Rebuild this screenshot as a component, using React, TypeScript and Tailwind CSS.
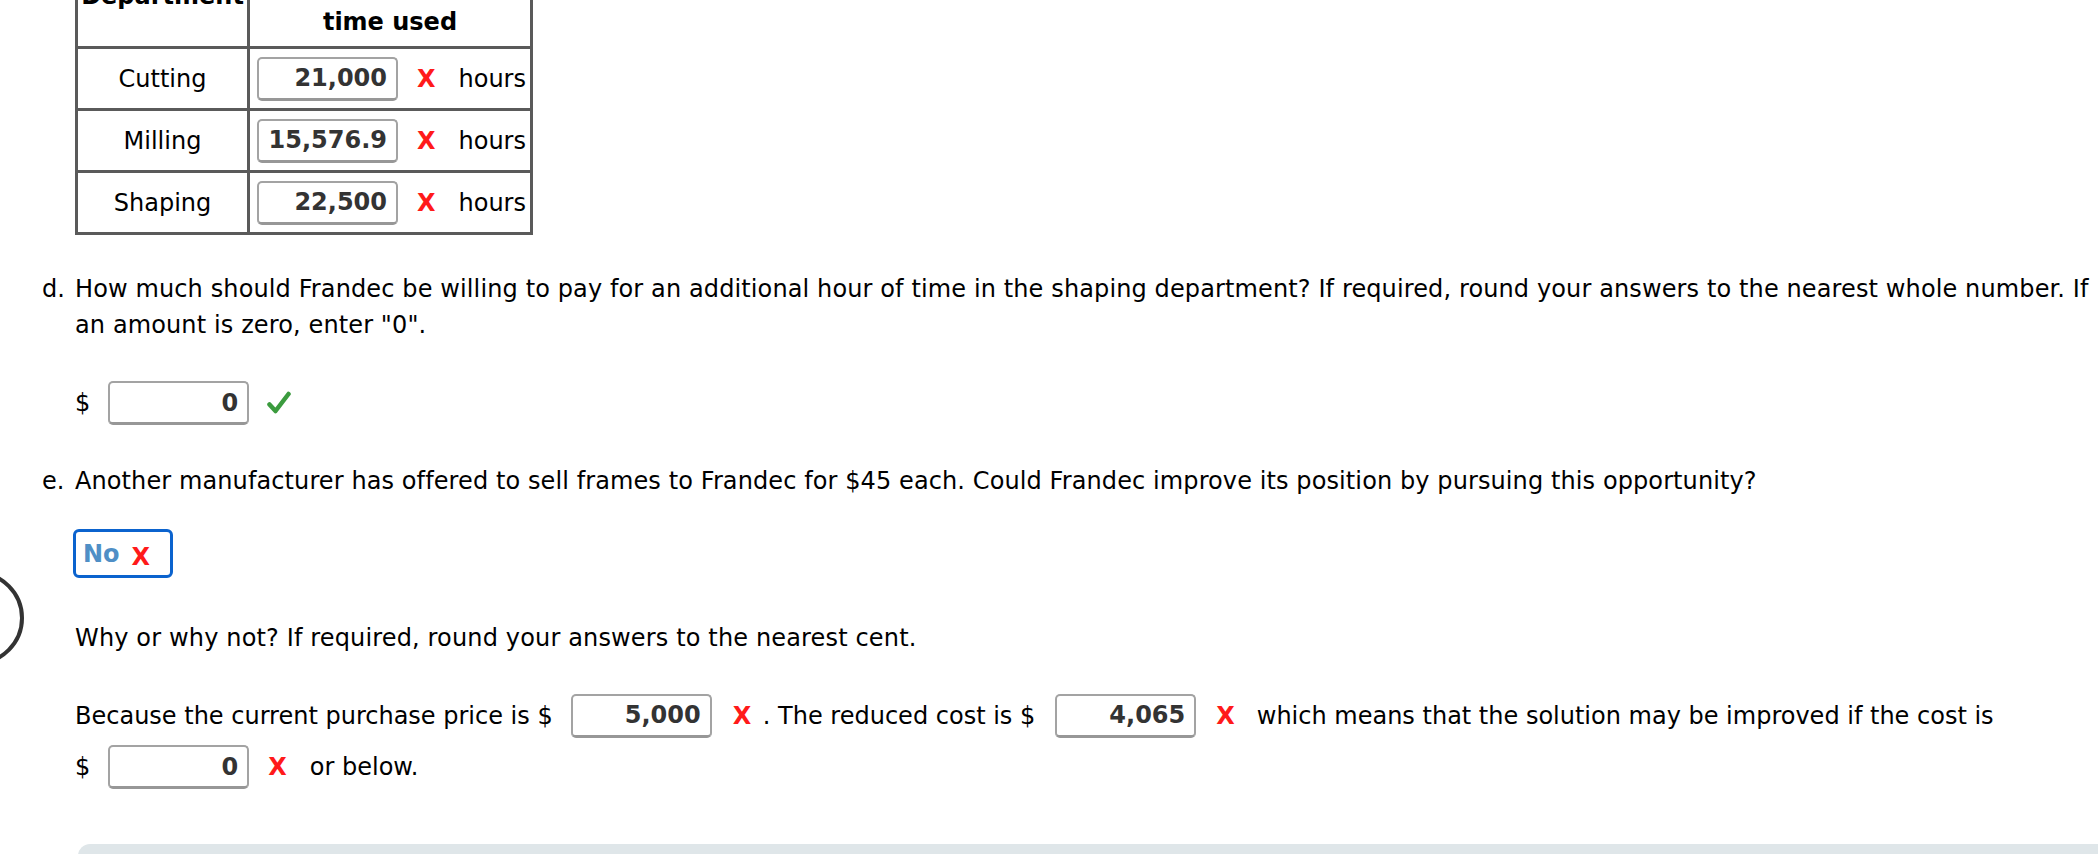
import React from 'react';

function Answer({ value }: { value: string }) {
    return (
        <div className="w-[141px] h-[44px] shrink-0 rounded-[5px] border-2 border-[#a3a3a3] border-b-[3px] border-b-[#979797] bg-white flex items-center justify-end pr-[9px] font-bold text-[#333]">
            {value}
        </div>
    );
}

function Wrong({ className = '' }: { className?: string }) {
    return <span className={`font-bold text-[#ff1a1a] ${className}`}>X</span>;
}

function Check() {
    return (
        <svg width="24" height="24" viewBox="0 0 24 24" className="shrink-0">
            <path d="M2.5 13.5 L8.5 20 L21.5 3" fill="none" stroke="#3b9b3e" strokeWidth="4.5" strokeLinecap="round" strokeLinejoin="round" />
        </svg>
    );
}

const rows = [
    { dept: 'Cutting', value: '21,000' },
    { dept: 'Milling', value: '15,576.9' },
    { dept: 'Shaping', value: '22,500' },
];

export default function App() {
    return (
        <div className="relative h-[854px] w-[2098px] overflow-hidden bg-white text-black font-['DejaVu_Sans',Verdana,sans-serif] text-[24px] leading-[36px]">
            {/* half-hidden round button on the left edge */}
            <div className="absolute left-[-70px] top-[571px] w-[94px] h-[94px] rounded-full border-[4px] border-[#333]"></div>

            <div className="-mt-[53px] pl-[75px]">
                {/* Table */}
                <div className="w-[458px] border-[3px] border-[#5a5a5a]">
                    <div className="flex h-[99px] border-b-[3px] border-[#5a5a5a] font-bold">
                        <div className="w-[172px] border-r-[3px] border-[#5a5a5a] flex items-center justify-center pb-[5px]">Department</div>
                        <div className="flex-1 flex flex-col items-center justify-center pt-[12px] leading-[36px]">
                            <span>Amount of</span>
                            <span>time used</span>
                        </div>
                    </div>
                    {rows.map((r, i) => (
                        <div key={r.dept} className={`flex h-[59px] ${i < rows.length - 1 ? 'box-content border-b-[3px] border-[#5a5a5a]' : ''}`}>
                            <div className="w-[172px] border-r-[3px] border-[#5a5a5a] flex items-center justify-center">{r.dept}</div>
                            <div className="flex-1 flex items-center pl-[7px]">
                                <Answer value={r.value} />
                                <Wrong className="ml-[19px]" />
                                <span className="ml-[23px]">hours</span>
                            </div>
                        </div>
                    ))}
                </div>

                {/* d */}
                <div className="-ml-[33px] mt-[36px] flex">
                    <span className="w-[33px] shrink-0">d.</span>
                    <div className="whitespace-nowrap tracking-[0.12px]">
                        <div>How much should Frandec be willing to pay for an additional hour of time in the shaping department? If required, round your answers to the nearest whole number. If</div>
                        <div>an amount is zero, enter "0".</div>
                    </div>
                </div>
                <div className="mt-[38px] flex h-[44px] items-center">
                    <span>$</span>
                    <div className="ml-[18px]"><Answer value="0" /></div>
                    <div className="ml-[18px]"><Check /></div>
                </div>

                {/* e */}
                <div className="-ml-[33px] mt-[38px] flex whitespace-nowrap">
                    <span className="w-[33px] shrink-0">e.</span>
                    <span className="tracking-[0.1px]">Another manufacturer has offered to sell frames to Frandec for $45 each. Could Frandec improve its position by pursuing this opportunity?</span>
                </div>
                <div className="-ml-[2px] mt-[30px] w-[100px] h-[49px] rounded-[6px] border-[3px] border-[#0b63ce] flex items-center pl-[7px] font-bold">
                    <span className="text-[#4f8fc6]">No</span>
                    <Wrong className="ml-[12px] mt-[6px]" />
                </div>

                <div className="mt-[42px] whitespace-nowrap tracking-[0.15px]">Why or why not? If required, round your answers to the nearest cent.</div>

                <div className="mt-[37px] flex h-[45px] items-center whitespace-nowrap">
                    <span>Because the current purchase price is $</span>
                    <div className="ml-[18px]"><Answer value="5,000" /></div>
                    <Wrong className="ml-[21px]" />
                    <span className="ml-[4px]">&nbsp;. The reduced cost is $</span>
                    <div className="ml-[20px]"><Answer value="4,065" /></div>
                    <Wrong className="ml-[20px]" />
                    <span className="ml-[22px]">which means that the solution may be improved if the cost is</span>
                </div>
                <div className="mt-[7px] flex h-[44px] items-center whitespace-nowrap">
                    <span>$</span>
                    <div className="ml-[18px]"><Answer value="0" /></div>
                    <Wrong className="ml-[19px]" />
                    <span className="ml-[23px]">or below.</span>
                </div>

                {/* bottom panel */}
                <div className="ml-[3px] mt-[55px] h-[120px] rounded-tl-[12px] bg-[#dfe6e9]"></div>
            </div>
        </div>
    );
}
